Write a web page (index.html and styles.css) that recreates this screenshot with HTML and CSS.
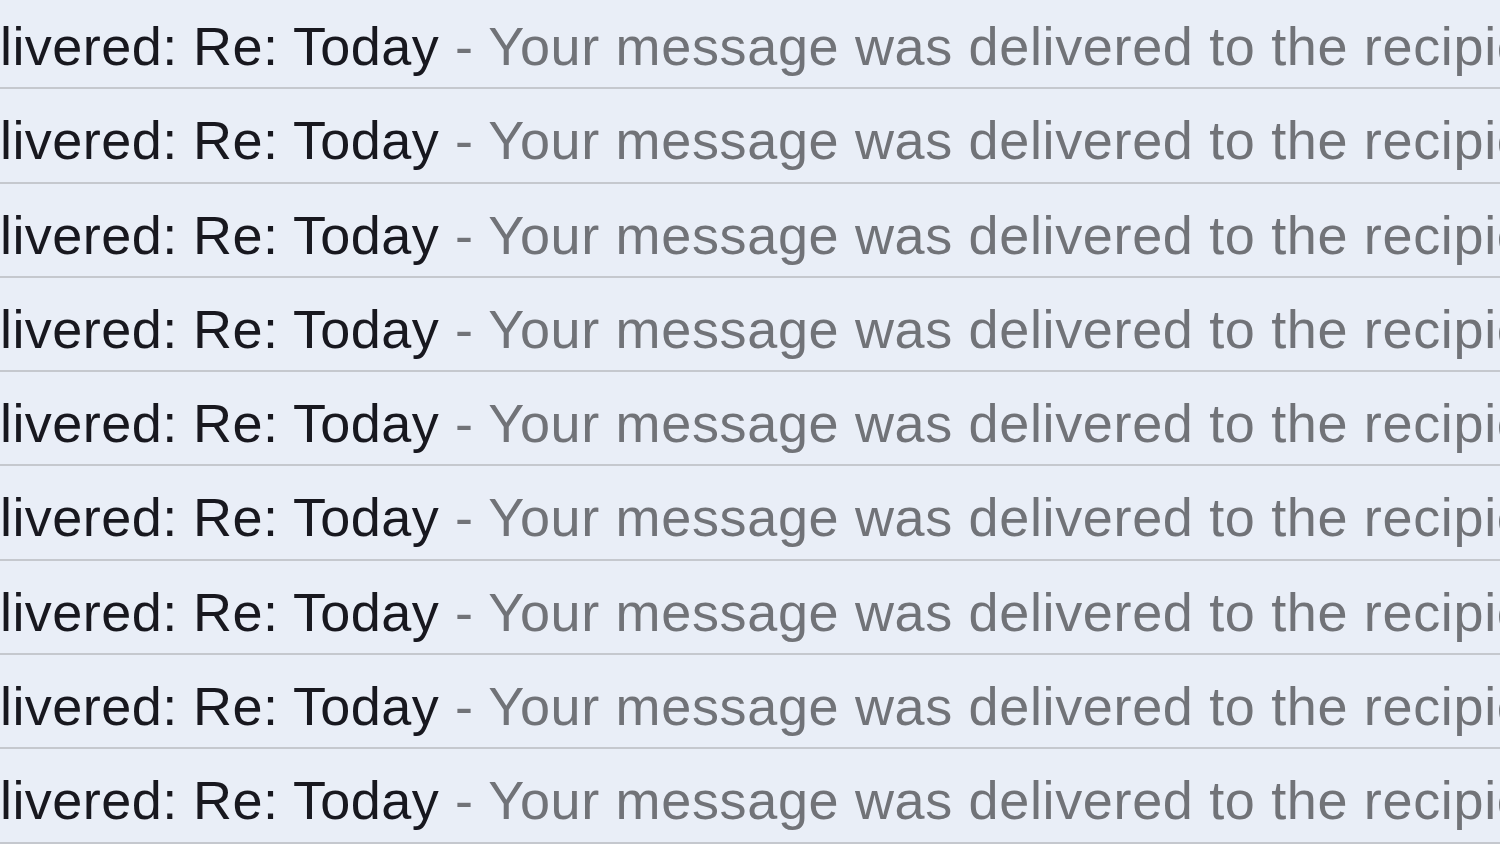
FILE: index.html
```html
<!DOCTYPE html>
<html lang="en">
<head>
    <meta charset="UTF-8">
    <title>Inbox</title>
    <link rel="stylesheet" href="styles.css">
</head>
<body>
    <div class="list">
        <div class="row"><span class="subject">Delivered: Re: Today</span><span class="snippet"> - Your message was delivered to the recipient.</span></div>
        <div class="row"><span class="subject">Delivered: Re: Today</span><span class="snippet"> - Your message was delivered to the recipient.</span></div>
        <div class="row"><span class="subject">Delivered: Re: Today</span><span class="snippet"> - Your message was delivered to the recipient.</span></div>
        <div class="row"><span class="subject">Delivered: Re: Today</span><span class="snippet"> - Your message was delivered to the recipient.</span></div>
        <div class="row"><span class="subject">Delivered: Re: Today</span><span class="snippet"> - Your message was delivered to the recipient.</span></div>
        <div class="row"><span class="subject">Delivered: Re: Today</span><span class="snippet"> - Your message was delivered to the recipient.</span></div>
        <div class="row"><span class="subject">Delivered: Re: Today</span><span class="snippet"> - Your message was delivered to the recipient.</span></div>
        <div class="row"><span class="subject">Delivered: Re: Today</span><span class="snippet"> - Your message was delivered to the recipient.</span></div>
        <div class="row"><span class="subject">Delivered: Re: Today</span><span class="snippet"> - Your message was delivered to the recipient.</span></div>
    </div>
</body>
</html>
```

FILE: styles.css
```css
html, body {
    margin: 0;
    height: 100%;
    overflow: hidden;
    background: #e9eef7;
}

.list {
    display: flex;
    flex-direction: column;
    margin-top: -5px;
}

.row {
    box-sizing: border-box;
    height: 94.3px;
    flex: none;
    padding-top: 20px;
    border-bottom: 2px solid #c5c8ce;
    font-family: "Liberation Sans", Arial, sans-serif;
    font-size: 54px;
    white-space: nowrap;
    overflow: hidden;
    text-indent: -70px;
    letter-spacing: 0.45px;
}

.subject {
    color: #18181f;
}

.snippet {
    color: #717378;
    letter-spacing: 0.65px;
}
```
